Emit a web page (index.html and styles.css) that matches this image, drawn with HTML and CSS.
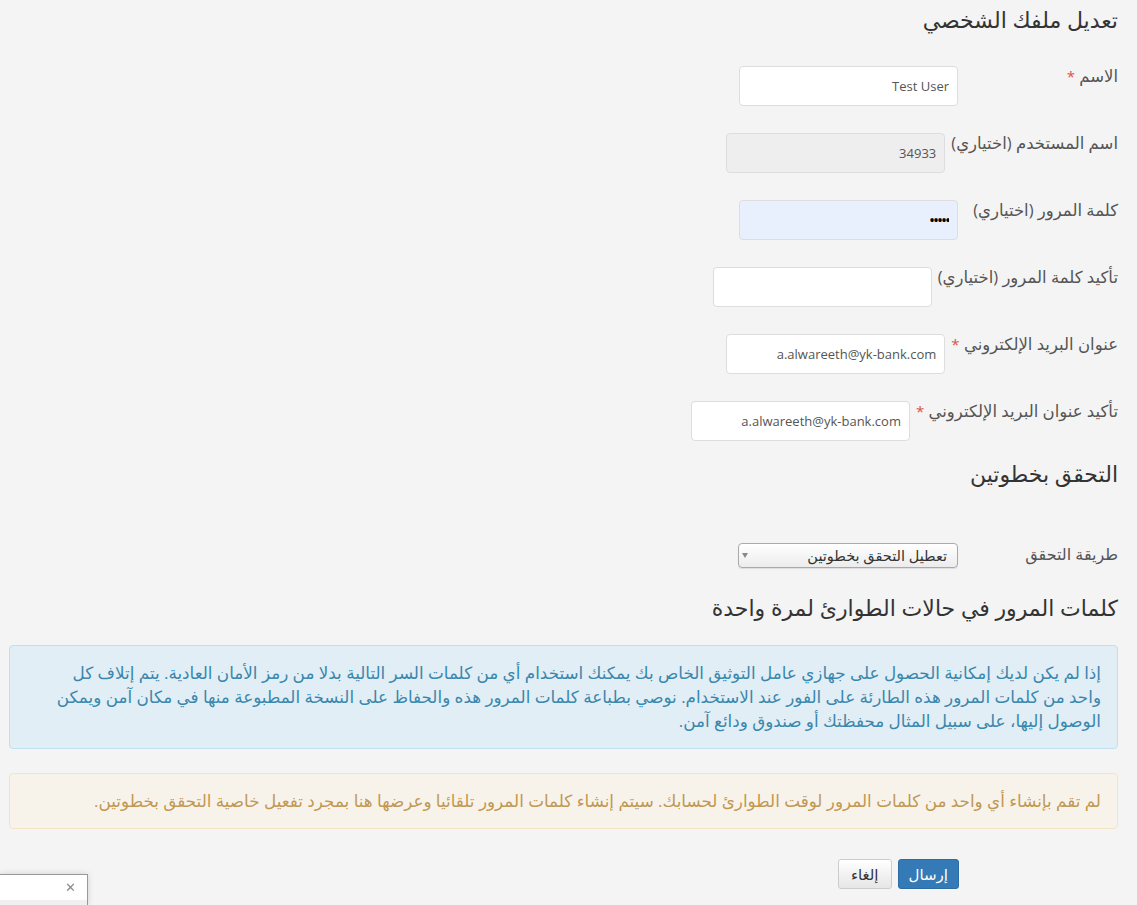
FILE: index.html
```html
<!DOCTYPE html>
<html lang="ar" dir="rtl">
<head>
  <meta charset="UTF-8">
  <title>تعديل ملفك الشخصي</title>
  <link rel="stylesheet" href="styles.css">
</head>
<body>
  <div class="page">
    <h2 class="page-title">تعديل ملفك الشخصي</h2>

    <form class="profile-form">
      <div class="form-row">
        <label>الاسم <span class="req">*</span></label>
        <input type="text" value="Test User">
      </div>
      <div class="form-row">
        <label>اسم المستخدم (اختياري)</label>
        <input type="text" value="34933" class="disabled" disabled>
      </div>
      <div class="form-row">
        <label>كلمة المرور (اختياري)</label>
        <input type="password" value="....." class="autofill">
      </div>
      <div class="form-row">
        <label>تأكيد كلمة المرور (اختياري)</label>
        <input type="password">
      </div>
      <div class="form-row">
        <label>عنوان البريد الإلكتروني <span class="req">*</span></label>
        <input type="text" value="a.alwareeth@yk-bank.com">
      </div>
      <div class="form-row">
        <label>تأكيد عنوان البريد الإلكتروني <span class="req">*</span></label>
        <input type="text" value="a.alwareeth@yk-bank.com">
      </div>

      <h3 class="section-title">التحقق بخطوتين</h3>

      <div class="form-row select-row">
        <label>طريقة التحقق</label>
        <div class="select-wrap">
          <select>
            <option>تعطيل التحقق بخطوتين</option>
          </select>
        </div>
      </div>

      <h3 class="section-title otp-title">كلمات المرور في حالات الطوارئ لمرة واحدة</h3>

      <div class="alert alert-info">
        إذا لم يكن لديك إمكانية الحصول على جهازي عامل التوثيق الخاص بك يمكنك استخدام أي من كلمات السر التالية بدلا من رمز الأمان العادية. يتم إتلاف كل<br>
        واحد من كلمات المرور هذه الطارئة على الفور عند الاستخدام. نوصي بطباعة كلمات المرور هذه والحفاظ على النسخة المطبوعة منها في مكان آمن ويمكن<br>
        الوصول إليها، على سبيل المثال محفظتك أو صندوق ودائع آمن.
      </div>

      <div class="alert alert-warn">
        لم تقم بإنشاء أي واحد من كلمات المرور لوقت الطوارئ لحسابك. سيتم إنشاء كلمات المرور تلقائيا وعرضها هنا بمجرد تفعيل خاصية التحقق بخطوتين.
      </div>

      <div class="form-actions">
        <button type="button" class="btn btn-primary">إرسال</button>
        <button type="button" class="btn">إلغاء</button>
      </div>
    </form>
  </div>

  <!-- popup in the corner -->
  <div class="corner-popup">
    <span class="close">&#x2715;</span>
  </div>
</body>
</html>
```

FILE: styles.css
```css
body {
  margin: 0;
  padding: 0;
  background: #f4f4f4;
  font-family: "Open Sans", "DejaVu Sans", sans-serif;
  color: #555;
  font-size: 16px;
}

.page {
  padding: 0 19px 0 9px;
}

.page-title {
  margin: 0;
  padding-top: 4px;
  height: 62px;
  font-size: 22px;
  font-weight: normal;
  color: #333;
  line-height: 30px;
}

.form-row {
  display: flex;
  align-items: flex-start;
  margin-bottom: 27px;
}

.form-row label {
  min-width: 154px;
  margin-left: 6px;
  padding-top: 0;
  font-size: 16.5px;
  line-height: 20px;
  white-space: nowrap;
}

.req {
  color: #d9534f;
  font-size: 15px;
}

.form-row input {
  box-sizing: border-box;
  width: 219px;
  height: 40px;
  padding: 0 8px;
  border: 1px solid #ddd;
  border-radius: 4px;
  background: #fff;
  font-family: inherit;
  font-size: 13px;
  color: #555;
  text-align: right;
}

.form-row input.disabled {
  background: #eee;
}

.form-row input.autofill {
  background: #e8f0fe;
  color: #000;
  font-size: 16px;
  letter-spacing: -2px;
}

.section-title {
  margin: -10px 0 0 0;
  font-size: 22px;
  font-weight: normal;
  color: #333;
  line-height: 30px;
  height: 85px;
}

.select-row {
  margin-bottom: 24px;
}

.select-row label {
  padding-top: 1px;
  font-size: 16px;
}

.select-wrap {
  position: relative;
}

.select-wrap select {
  -webkit-appearance: none;
  appearance: none;
  box-sizing: border-box;
  width: 220px;
  height: 25px;
  padding: 0 10px 0 20px;
  border: 1px solid #aaa;
  border-radius: 4px;
  background: linear-gradient(#fff, #ececec);
  box-shadow: 0 1px 1px rgba(0,0,0,0.1);
  font-family: inherit;
  font-size: 14.5px;
  color: #333;
}

.select-wrap::after {
  content: '';
  position: absolute;
  left: 4px;
  top: 10px;
  border-left: 3px solid transparent;
  border-right: 3px solid transparent;
  border-top: 5px solid #888;
}

.otp-title {
  margin-top: 0;
  height: 53px;
}

.alert {
  border: 1px solid;
  border-radius: 4px;
  padding: 15px 16px;
  font-size: 16.8px;
  line-height: 24px;
}

.alert-info {
  background: #e1eef5;
  border-color: #c1dff0;
  color: #3a87ad;
  margin-bottom: 24px;
}

.alert-warn {
  background: #f8f3ea;
  border-color: #f3e4c6;
  color: #c09853;
}

.form-actions {
  display: flex;
  gap: 6px;
  padding: 30px 159px 0 0;
}

.btn {
  height: 30px;
  padding: 0 12px;
  border: 1px solid #ccc;
  border-radius: 3px;
  background: linear-gradient(#fff, #e6e6e6);
  font-family: inherit;
  font-size: 15px;
  color: #333;
  cursor: pointer;
}

.btn-primary {
  padding: 0 10px;
  background: #337ab7;
  border-color: #2e6da4;
  color: #fff;
}

.corner-popup {
  position: fixed;
  left: 0;
  bottom: 0;
  width: 87px;
  height: 30px;
  background: linear-gradient(#fff 25px, #f0f0f0 25px);
  border-top: 1px solid #999;
  border-right: 1px solid #999;
  box-shadow: 0 0 6px rgba(0,0,0,0.15);
}

.corner-popup .close {
  position: absolute;
  left: 65px;
  top: 3px;
  font-size: 13px;
  color: #888;
}
```
